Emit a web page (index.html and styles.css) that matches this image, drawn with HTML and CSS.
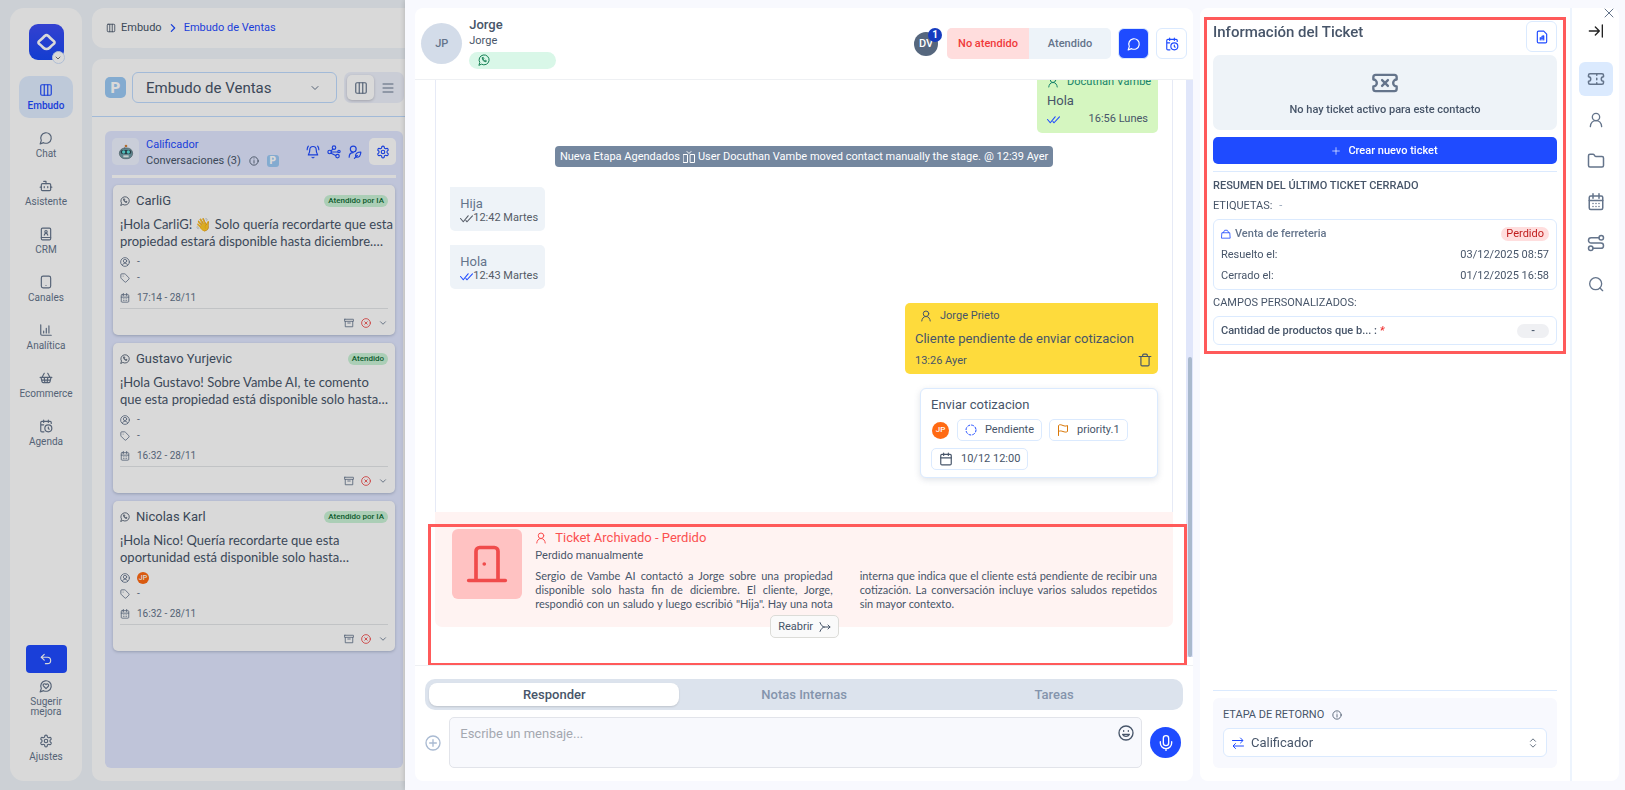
FILE: index.html
```html
<!DOCTYPE html>
<html lang="es">
<head>
<meta charset="utf-8">
<title>Embudo de Ventas</title>
<link rel="stylesheet" href="styles.css">
</head>
<body>
<svg class="sprite" aria-hidden="true">
  <symbol id="columns" viewBox="0 0 24 24"><rect x="3" y="3" width="18" height="18" rx="2"/><path d="M9 3v18M15 3v18"/></symbol>
  <symbol id="chat" viewBox="0 0 24 24"><path d="M7.9 20A9 9 0 1 0 4 16.100L2 22Z"/></symbol>
  <symbol id="bot" viewBox="0 0 24 24"><path d="M12 8V4H8"/><rect x="4" y="8" width="16" height="12" rx="2"/><path d="M2 14h2M20 14h2M15 13v2M9 13v2"/></symbol>
  <symbol id="contact" viewBox="0 0 24 24"><rect x="4" y="2" width="16" height="20" rx="2"/><path d="M4 18h16M9 14c.5-2 1.500-3 3-3s2.500 1 3 3"/><circle cx="12" cy="8" r="2"/></symbol>
  <symbol id="phone" viewBox="0 0 24 24"><rect x="4" y="2" width="16" height="20" rx="3"/><path d="M12 18h.01"/></symbol>
  <symbol id="chart" viewBox="0 0 24 24"><path d="M3 3v16a2 2 0 0 0 2 2h16M8 17v-3M12.500 17V9M17 17V5"/></symbol>
  <symbol id="basket" viewBox="0 0 24 24"><path d="m15 11-1 9M19 11l-4-7M2 11h20M3.500 11l1.600 7.400a2 2 0 0 0 2 1.600h9.800a2 2 0 0 0 2-1.600l1.700-7.400M4.500 15.500h15M5 11l4-7M9 11l1 9"/></symbol>
  <symbol id="calclock" viewBox="0 0 24 24"><path d="M21 7.500V6a2 2 0 0 0-2-2H5a2 2 0 0 0-2 2v14a2 2 0 0 0 2 2h3.500M16 2v4M8 2v4M3 10h5M17.500 17.500 16 16.300V14"/><circle cx="16" cy="16" r="6"/></symbol>
  <symbol id="calendar" viewBox="0 0 24 24"><rect x="3" y="4" width="18" height="18" rx="2"/><path d="M8 2v4M16 2v4M3 10h18"/></symbol>
  <symbol id="caldays" viewBox="0 0 24 24"><rect x="3" y="4" width="18" height="18" rx="2"/><path d="M8 1v6M16 1v6M3 10h18M8 14h.01M12 14h.01M16 14h.01M8 18h.01M12 18h.01M16 18h.01"/></symbol>
  <symbol id="undo" viewBox="0 0 24 24"><path d="M9 14 4 9l5-5"/><path d="M4 9h10.500a5.500 5.500 0 0 1 0 11H11"/></symbol>
  <symbol id="heartchat" viewBox="0 0 24 24"><path d="M7.900 20A9 9 0 1 0 4 16.100L2 22Z"/><path d="M15.800 9.200a2.500 2.500 0 0 0-3.500 0l-.3.400-.35-.3a2.500 2.500 0 1 0-3.200 3.600l3.600 3.500 3.600-3.500a2.500 2.500 0 0 0 .15-3.700"/></symbol>
  <symbol id="gear" viewBox="0 0 24 24"><path d="M12.200 2h-.4a2 2 0 0 0-2 2v.2a2 2 0 0 1-1 1.700l-.4.300a2 2 0 0 1-2 0l-.2-.1a2 2 0 0 0-2.700.7l-.2.400a2 2 0 0 0 .7 2.700l.2.100a2 2 0 0 1 1 1.700v.5a2 2 0 0 1-1 1.800l-.2.100a2 2 0 0 0-.7 2.700l.2.400a2 2 0 0 0 2.700.7l.2-.1a2 2 0 0 1 2 0l.4.300a2 2 0 0 1 1 1.700v.2a2 2 0 0 0 2 2h.4a2 2 0 0 0 2-2v-.2a2 2 0 0 1 1-1.700l.4-.3a2 2 0 0 1 2 0l.2.100a2 2 0 0 0 2.700-.7l.2-.4a2 2 0 0 0-.7-2.700l-.2-.1a2 2 0 0 1-1-1.700v-.5a2 2 0 0 1 1-1.800l.2-.1a2 2 0 0 0 .7-2.700l-.2-.4a2 2 0 0 0-2.700-.7l-.2.100a2 2 0 0 1-2 0l-.4-.3a2 2 0 0 1-1-1.700V4a2 2 0 0 0-2-2z"/><circle cx="12" cy="12" r="3"/></symbol>
  <symbol id="down" viewBox="0 0 24 24"><path d="m6 9 6 6 6-6"/></symbol>
  <symbol id="right" viewBox="0 0 24 24"><path d="m8 4 8 8-8 8"/></symbol>
  <symbol id="updown" viewBox="0 0 24 24"><path d="m6 16 6 6 6-6M6 8l6-6 6 6"/></symbol>
  <symbol id="menu" viewBox="0 0 24 24"><path d="M2 4h20M2 12h20M2 20h20"/></symbol>
  <symbol id="bell" viewBox="0 0 24 24"><path d="M10.300 21a2 2 0 0 0 3.400 0M22 8c0-2.300-.8-4.300-2-6M4 2C2.800 3.700 2 5.700 2 8M6.500 8a5.500 5.500 0 0 1 11 0c0 6 2.500 8 2.500 9H4c0-1 2.500-3 2.500-9"/></symbol>
  <symbol id="nodes" viewBox="0 0 24 24"><circle cx="4.500" cy="12" r="3"/><circle cx="12" cy="4.500" r="3"/><circle cx="18" cy="19" r="3"/><path d="M7.500 12H19M7 10l3-3M7 14l8 4"/><circle cx="20.500" cy="11" r="2"/></symbol>
  <symbol id="useredit" viewBox="0 0 24 24"><circle cx="9" cy="7" r="5"/><path d="M2 21c0-5 3-8 7-8"/><path d="M13 19c-.5-4 3-7 9-7 0 6-3 9.500-7 9-1 0-2-1-2-2zM11 23l5-5"/></symbol>
  <symbol id="info" viewBox="0 0 24 24"><circle cx="12" cy="12" r="10"/><path d="M12 17v-6M12 7h.01"/></symbol>
  <symbol id="whatsapp" viewBox="0 0 24 24"><path d="M2 22l1.600-5A10 10 0 1 1 7.500 20.700z"/><path d="M8.500 8c0 4.500 3 7.500 7.500 7.500l.8-2-2.300-1.200-1.200 1.200c-1-.5-2-1.500-2.500-2.600L12 9.700 10.800 7.400z"/></symbol>
  <symbol id="usercircle" viewBox="0 0 24 24"><circle cx="12" cy="12" r="10.500"/><circle cx="12" cy="9.500" r="4"/><path d="M6 20c0-3 2.500-5 6-5s6 2 6 5"/></symbol>
  <symbol id="tag" viewBox="0 0 24 24"><path d="M12.600 2.600A2 2 0 0 0 11.200 2H4a2 2 0 0 0-2 2v7.200a2 2 0 0 0 .6 1.400l8.700 8.700a2.400 2.400 0 0 0 3.400 0l6.600-6.600a2.400 2.400 0 0 0 0-3.400zM7.500 7.500h.01"/></symbol>
  <symbol id="archive" viewBox="0 0 24 24"><rect x="1" y="3" width="22" height="5" rx="1"/><path d="M3 8v13h18V8M9 12h6"/></symbol>
  <symbol id="xcircle" viewBox="0 0 24 24"><circle cx="12" cy="12" r="10.500"/><path d="m15 9-6 6M9 9l6 6"/></symbol>
  <symbol id="user" viewBox="0 0 24 24"><circle cx="12" cy="7.500" r="5.500"/><path d="M3.500 22c.5-5 3.500-9 8.500-9s8 4 8.500 9"/></symbol>
  <symbol id="checks" viewBox="0 0 24 16"><path d="m1 8 5 6L15 3M11 12l2 2L23 3"/></symbol>
  <symbol id="stage" viewBox="0 0 24 24"><rect x="1" y="7" width="8" height="16"/><rect x="15" y="7" width="8" height="16"/><path d="M8 1l4 4 4-4"/></symbol>
  <symbol id="trash" viewBox="0 0 24 24"><path d="M2 6h20M5 6v14a2 2 0 0 0 2 2h10a2 2 0 0 0 2-2V6M8 6V4a2 2 0 0 1 2-2h4a2 2 0 0 1 2 2v2"/></symbol>
  <symbol id="dashed" viewBox="0 0 24 24"><circle cx="12" cy="12" r="10" stroke-dasharray="4 3.850"/></symbol>
  <symbol id="flag" viewBox="0 0 24 24"><path d="M3 23V3c3-3 6-1 9 0s5 2 9 0v12c-3 2-6 1-9 0s-6-2-9 0"/></symbol>
  <symbol id="door" viewBox="0 0 24 24"><path d="M2 21h20M6 21V5a2 2 0 0 1 2-2h8a2 2 0 0 1 2 2v16M10.500 12h.01"/></symbol>
  <symbol id="merge" viewBox="0 0 24 24"><path d="M2 3c2 5 5 9 9 9h11M2 21c2-5 5-9 9-9M18 8l4 4-4 4"/></symbol>
  <symbol id="plus" viewBox="0 0 24 24"><path d="M12 2v20M2 12h20"/></symbol>
  <symbol id="pluscircle" viewBox="0 0 24 24"><circle cx="12" cy="12" r="10.500"/><path d="M12 7v10M7 12h10"/></symbol>
  <symbol id="smile" viewBox="0 0 24 24"><circle cx="12" cy="12" r="10.500"/><path d="M7 14c2 4 8 4 10 0zM8.500 8.500v1M15.500 8.500v1"/></symbol>
  <symbol id="mic" viewBox="0 0 24 24"><rect x="8" y="1" width="8" height="15" rx="4"/><path d="M3.500 10v2a8.500 8.500 0 0 0 17 0v-2M12 20.500V24"/></symbol>
  <symbol id="file" viewBox="0 0 24 24"><path d="M15 2H6a2 2 0 0 0-2 2v16a2 2 0 0 0 2 2h12a2 2 0 0 0 2-2V7z"/><path d="M9 17v-4M12 17v-6l3-1v7M9 14h5"/></symbol>
  <symbol id="ticketx" viewBox="0 0 24 24"><path d="M2 9a3 3 0 0 1 0 6v2a2 2 0 0 0 2 2h16a2 2 0 0 0 2-2v-2a3 3 0 0 1 0-6V7a2 2 0 0 0-2-2H4a2 2 0 0 0-2 2zM9.500 9.500l5 5M14.500 9.500l-5 5"/></symbol>
  <symbol id="ticket" viewBox="0 0 24 24"><path d="M2 9a3 3 0 0 1 0 6v2a2 2 0 0 0 2 2h16a2 2 0 0 0 2-2v-2a3 3 0 0 1 0-6V7a2 2 0 0 0-2-2H4a2 2 0 0 0-2 2zM13 5v2M13 17v2M13 11v2"/></symbol>
  <symbol id="folder" viewBox="0 0 24 24"><path d="M20 20a2 2 0 0 0 2-2V8a2 2 0 0 0-2-2h-7.900a2 2 0 0 1-1.700-.9l-.8-1.200A2 2 0 0 0 7.900 3H4a2 2 0 0 0-2 2v13a2 2 0 0 0 2 2z"/></symbol>
  <symbol id="route" viewBox="0 0 24 24"><circle cx="5" cy="19" r="3"/><circle cx="19" cy="5" r="3"/><path d="M16 5H5.500a3.500 3.500 0 0 0 0 7h13a3.500 3.500 0 0 1 0 7H8"/></symbol>
  <symbol id="search" viewBox="0 0 24 24"><circle cx="11.500" cy="11.500" r="9"/><path d="m22 22-4-4"/></symbol>
  <symbol id="collapse" viewBox="0 0 24 24"><path d="M2 12h15M11 6l6 6-6 6M21.500 3v18"/></symbol>
  <symbol id="close" viewBox="0 0 24 24"><path d="M4 4l16 16M20 4 4 20"/></symbol>
  <symbol id="bag" viewBox="0 0 24 24"><path d="M3 9h18l1 13H2zM5 9l4-6h6l4 6"/></symbol>
  <symbol id="swap" viewBox="0 0 24 24"><path d="M1 7h20M17 2l5 5-5 5M23 18H3M7 13l-5 5 5 5"/></symbol>
  <symbol id="robot" viewBox="0 0 24 24"><circle cx="12" cy="3" r="2" fill="#d0803a" stroke="none"/><rect x="2" y="6" width="20" height="16" rx="8" fill="#6d9ba5" stroke="#5a6b72" stroke-width="1"/><rect x="4" y="9" width="16" height="6" rx="3" fill="#2e4650" stroke="none"/><circle cx="8.500" cy="12" r="2.500" fill="#5de0dc" stroke="none"/><circle cx="15.500" cy="12" r="2.500" fill="#5de0dc" stroke="none"/><rect x="8" y="17" width="8" height="3" fill="#e8efef" stroke="none"/></symbol>
</svg>

<div class="app">
  <nav class="sidebar" aria-label="Principal">
    <button class="logo" aria-label="Espacio de trabajo">
      <svg class="logo-mark" viewBox="0 0 24 24"><path d="M10 4.500a3 3 0 0 1 4 0c2 2.500 4 4 6.500 6a2 2 0 0 1 0 3c-2 1.500-3 2.500-5 4.500a5 5 0 0 1-7 0c-2-2-3-3-5-4.500a2 2 0 0 1 0-3c2.500-2 4.500-3.500 6.500-6z"/></svg>
      <span class="logo-more"><svg class="i8"><use href="#down"/></svg></span>
    </button>
    <a class="nav-item active" href="#embudo"><svg class="i16"><use href="#columns"/></svg>Embudo</a>
    <a class="nav-item" href="#chat"><svg class="i16"><use href="#chat"/></svg>Chat</a>
    <a class="nav-item" href="#asistente"><svg class="i16"><use href="#bot"/></svg>Asistente</a>
    <a class="nav-item" href="#crm"><svg class="i16"><use href="#contact"/></svg>CRM</a>
    <a class="nav-item" href="#canales"><svg class="i16"><use href="#phone"/></svg>Canales</a>
    <a class="nav-item" href="#analitica"><svg class="i16"><use href="#chart"/></svg>Analítica</a>
    <a class="nav-item" href="#ecommerce"><svg class="i16"><use href="#basket"/></svg>Ecommerce</a>
    <a class="nav-item" href="#agenda"><svg class="i16"><use href="#calclock"/></svg>Agenda</a>
    <div class="nav-foot">
      <button class="back" aria-label="Volver"><svg class="i14"><use href="#undo"/></svg></button>
      <a class="nav-item short" href="#sugerir"><svg class="i16"><use href="#heartchat"/></svg>Sugerir mejora</a>
      <a class="nav-item" href="#ajustes"><svg class="i16"><use href="#gear"/></svg>Ajustes</a>
    </div>
  </nav>

  <div class="main">
    <header class="crumbs">
      <svg class="i12"><use href="#columns"/></svg>
      <a href="#embudo">Embudo</a>
      <svg class="i10 blue"><use href="#right"/></svg>
      <a class="blue" href="#ventas">Embudo de Ventas</a>
    </header>
    <section class="board">
      <div class="toolbar">
        <span class="p-badge large">P</span>
        <div class="funnel">
          <select aria-label="Embudo"><option>Embudo de Ventas</option></select>
          <svg class="i12"><use href="#down"/></svg>
        </div>
        <div class="views">
          <button class="on" aria-label="Columnas"><svg class="i14"><use href="#columns"/></svg></button>
          <button aria-label="Lista"><svg class="i12"><use href="#menu"/></svg></button>
        </div>
      </div>
      <div class="column">
        <div class="col-head">
          <span class="col-avatar"><svg class="i16"><use href="#robot"/></svg></span>
          <div class="col-text">
            <strong>Calificador</strong>
            <span class="col-sub">Conversaciones (3) <svg class="i12"><use href="#info"/></svg><span class="p-badge">P</span></span>
          </div>
          <div class="col-tools">
            <svg class="i14"><use href="#bell"/></svg>
            <svg class="i14"><use href="#nodes"/></svg>
            <svg class="i14"><use href="#useredit"/></svg>
            <button aria-label="Configurar"><svg class="i14"><use href="#gear"/></svg></button>
          </div>
        </div>
        <article class="card">
          <div class="card-head"><svg class="i10"><use href="#whatsapp"/></svg><h3>CarliG</h3><span class="pill">Atendido por IA</span></div>
          <p>¡Hola CarliG! 👋 Solo quería recordarte que esta<br>propiedad estará disponible hasta diciembre.…</p>
          <div class="meta"><svg class="i10"><use href="#usercircle"/></svg>-</div>
          <div class="meta"><svg class="i10"><use href="#tag"/></svg>-</div>
          <div class="meta date"><svg class="i10"><use href="#caldays"/></svg>17:14 - 28/11</div>
          <div class="card-foot"><svg class="i10"><use href="#archive"/></svg><svg class="i10 red"><use href="#xcircle"/></svg><svg class="i10"><use href="#down"/></svg></div>
        </article>
        <article class="card">
          <div class="card-head"><svg class="i10"><use href="#whatsapp"/></svg><h3>Gustavo Yurjevic</h3><span class="pill">Atendido</span></div>
          <p>¡Hola Gustavo! Sobre Vambe AI, te comento<br>que esta propiedad está disponible solo hasta…</p>
          <div class="meta"><svg class="i10"><use href="#usercircle"/></svg>-</div>
          <div class="meta"><svg class="i10"><use href="#tag"/></svg>-</div>
          <div class="meta date"><svg class="i10"><use href="#caldays"/></svg>16:32 - 28/11</div>
          <div class="card-foot"><svg class="i10"><use href="#archive"/></svg><svg class="i10 red"><use href="#xcircle"/></svg><svg class="i10"><use href="#down"/></svg></div>
        </article>
        <article class="card">
          <div class="card-head"><svg class="i10"><use href="#whatsapp"/></svg><h3>Nicolas Karl</h3><span class="pill">Atendido por IA</span></div>
          <p>¡Hola Nico! Quería recordarte que esta<br>oportunidad está disponible solo hasta…</p>
          <div class="meta"><svg class="i10"><use href="#usercircle"/></svg><span class="owner tiny">JP</span></div>
          <div class="meta"><svg class="i10"><use href="#tag"/></svg>-</div>
          <div class="meta date"><svg class="i10"><use href="#caldays"/></svg>16:32 - 28/11</div>
          <div class="card-foot"><svg class="i10"><use href="#archive"/></svg><svg class="i10 red"><use href="#xcircle"/></svg><svg class="i10"><use href="#down"/></svg></div>
        </article>
      </div>
    </section>
  </div>
</div>

<div class="scrim"></div>

<div class="drawer" role="dialog" aria-label="Conversación con Jorge">
  <section class="chat">
    <header class="chat-head">
      <span class="avatar">JP</span>
      <div class="who">
        <h1>Jorge</h1>
        <span class="sub">Jorge</span>
        <span class="channel"><svg class="i12"><use href="#whatsapp"/></svg></span>
      </div>
      <div class="chat-tools">
        <span class="agent">DV<b>1</b></span>
        <div class="state"><button class="off">No atendido</button><button>Atendido</button></div>
        <button class="square fill" aria-label="Chat"><svg class="i14"><use href="#chat"/></svg></button>
        <button class="square" aria-label="Agendar"><svg class="i14"><use href="#calclock"/></svg></button>
      </div>
    </header>

    <div class="stream">
      <div class="thread">
        <div class="bubble sent">
          <span class="author"><svg class="i12"><use href="#user"/></svg>Docuthan Vambe</span>
          <span class="body">Hola</span>
          <span class="time"><svg class="tick blue"><use href="#checks"/></svg>16:56 Lunes</span>
        </div>
        <div class="event">Nueva Etapa Agendados <svg class="i12"><use href="#stage"/></svg> User Docuthan Vambe moved contact manually the stage. <span>@ 12:39 Ayer</span></div>
        <div class="bubble got"><span class="body">Hija</span><span class="time"><svg class="tick"><use href="#checks"/></svg>12:42 Martes</span></div>
        <div class="bubble got"><span class="body">Hola</span><span class="time"><svg class="tick blue"><use href="#checks"/></svg>12:43 Martes</span></div>
        <div class="bubble note">
          <span class="author"><svg class="i12"><use href="#user"/></svg>Jorge Prieto</span>
          <span class="body">Cliente pendiente de enviar cotizacion</span>
          <span class="time">13:26 Ayer <button aria-label="Eliminar"><svg class="i14"><use href="#trash"/></svg></button></span>
        </div>
        <div class="task">
          <h2>Enviar cotizacion</h2>
          <div class="chips">
            <span class="owner">JP</span>
            <span class="chip"><svg class="i12 blue"><use href="#dashed"/></svg>Pendiente</span>
            <span class="chip"><svg class="i12 amber"><use href="#flag"/></svg>priority.1</span>
            <span class="chip"><svg class="i14"><use href="#calendar"/></svg>10/12 12:00</span>
          </div>
        </div>
      </div>
      <div class="archived">
        <span class="door"><svg class="i48"><use href="#door"/></svg></span>
        <div class="arch-text">
          <h2><svg class="i12"><use href="#user"/></svg>Ticket Archivado - Perdido</h2>
          <span>Perdido manualmente</span>
          <p>Sergio de Vambe AI contactó a Jorge sobre una propiedad disponible solo hasta fin de diciembre. El cliente, Jorge, respondió con un saludo y luego escribió "Hija". Hay una nota interna que indica que el cliente está pendiente de recibir una cotización. La conversación incluye varios saludos repetidos sin mayor contexto.</p>
        </div>
        <button class="reopen">Reabrir <svg class="i12"><use href="#merge"/></svg></button>
      </div>
      <div class="scrollbar"><i></i></div>
      <div class="mark mark-ticket"></div>
    </div>

    <footer class="composer">
      <div class="tabs" role="tablist">
        <button class="on" role="tab">Responder</button>
        <button role="tab">Notas Internas</button>
        <button role="tab">Tareas</button>
      </div>
      <div class="write">
        <button class="add" aria-label="Adjuntar"><svg class="i16"><use href="#pluscircle"/></svg></button>
        <div class="field">
          <textarea aria-label="Mensaje" placeholder="Escribe un mensaje..."></textarea>
          <button aria-label="Emoji"><svg class="i16"><use href="#smile"/></svg></button>
        </div>
        <button class="mic" aria-label="Grabar audio"><svg class="i16"><use href="#mic"/></svg></button>
      </div>
    </footer>
  </section>

  <section class="side">
    <div class="info">
      <div class="ticket-info">
        <div class="info-head"><h2>Información del Ticket</h2><button class="square" aria-label="Exportar"><svg class="i14"><use href="#file"/></svg></button></div>
        <div class="empty"><svg class="i28"><use href="#ticketx"/></svg>No hay ticket activo para este contacto</div>
        <button class="create"><svg class="i8"><use href="#plus"/></svg>Crear nuevo ticket</button>
        <h3>RESUMEN DEL ÚLTIMO TICKET CERRADO</h3>
        <div class="line">ETIQUETAS: <span>-</span></div>
        <div class="box">
          <div class="row"><b><svg class="i10 blue"><use href="#bag"/></svg>Venta de ferreteria</b><span class="lost">Perdido</span></div>
          <div class="row"><span>Resuelto el:</span><span>03/12/2025 08:57</span></div>
          <div class="row"><span>Cerrado el:</span><span>01/12/2025 16:58</span></div>
        </div>
        <div class="line">CAMPOS PERSONALIZADOS:</div>
        <div class="box custom"><span>Cantidad de productos que b... : <em>*</em></span><span class="none">-</span></div>
        <div class="mark mark-info"></div>
      </div>
      <div class="return">
        <label for="stage-select">ETAPA DE RETORNO <svg class="i10"><use href="#info"/></svg></label>
        <div class="stage-box">
          <svg class="i12 blue"><use href="#swap"/></svg>
          <select id="stage-select"><option>Calificador</option></select>
          <svg class="i10"><use href="#updown"/></svg>
        </div>
      </div>
    </div>
    <nav class="rail" aria-label="Paneles">
      <button class="dark" aria-label="Contraer"><svg class="i16"><use href="#collapse"/></svg></button>
      <button class="on" aria-label="Ticket"><svg class="i18"><use href="#ticket"/></svg></button>
      <button aria-label="Contacto"><svg class="i16"><use href="#user"/></svg></button>
      <button aria-label="Archivos"><svg class="i18"><use href="#folder"/></svg></button>
      <button aria-label="Calendario"><svg class="i18"><use href="#caldays"/></svg></button>
      <button aria-label="Recorrido"><svg class="i18"><use href="#route"/></svg></button>
      <button aria-label="Buscar"><svg class="i16"><use href="#search"/></svg></button>
    </nav>
  </section>
  <button class="close" aria-label="Cerrar"><svg class="i12"><use href="#close"/></svg></button>
</div>
</body>
</html>
```
FILE: styles.css
```css
:root {
  --ink: #475569;
  --soft: #64748b;
  --blue: #1f4bff;
  --line: #dbeafe;
  --red: #ff5a5a;
}
* { box-sizing: border-box; margin: 0; }
html, body { height: 100%; }
body {
  overflow: hidden;
  background: #f0f5fb;
  color: var(--ink);
  font-family: Roboto, Lato, sans-serif;
  font-size: 11px;
  line-height: 16px;
}
button, select, textarea { font: inherit; color: inherit; background: none; border: 0; padding: 0; }
select { appearance: none; }
a { color: inherit; text-decoration: none; }
h1, h2, h3 { font-weight: 400; }
p { font-family: Lato, Roboto, sans-serif; }
svg { flex: none; fill: none; stroke: currentColor; stroke-width: 2; stroke-linecap: round; stroke-linejoin: round; }
.sprite { display: none; }
.i8 { width: 8px; height: 8px; }
.i10 { width: 10px; height: 10px; }
.i12 { width: 12px; height: 12px; }
.i14 { width: 14px; height: 14px; }
.i16 { width: 16px; height: 16px; }
.i18 { width: 18px; height: 18px; }
.i28 { width: 28px; height: 28px; }
.i48 { width: 44px; height: 44px; }
.blue { color: var(--blue); }
.red { color: #ef4444; }
.amber { color: #d97706; }

/* Application behind the drawer */
.app { display: flex; gap: 10px; height: 100%; padding: 8px 10px 9px; }
.sidebar {
  flex: none; width: 72px; display: flex; flex-direction: column; align-items: center; gap: 6px;
  padding: 16px 4px 12px; border-radius: 14px; background: #fff; color: var(--soft);
}
.logo { position: relative; width: 35px; height: 36px; margin-bottom: 10px; border-radius: 9px; background: linear-gradient(#3d4df5, #1748f5); display: grid; place-items: center; }
.logo-mark { width: 21px; height: 21px; stroke: #fff; stroke-width: 3; }
.logo-more { position: absolute; right: -1px; bottom: -4px; width: 13px; height: 13px; border: 1px solid #cfe0fb; border-radius: 50%; background: #fff; color: #333; display: grid; place-items: center; }
.nav-item { display: flex; flex-direction: column; align-items: center; justify-content: center; gap: 1px; width: 54px; min-height: 42px; font-size: 10px; line-height: 14px; }
.nav-item svg { width: 14px; height: 14px; margin: 1px; }
.nav-item.active { border-radius: 10px; background: #e0edff; color: var(--blue); font-weight: 500; }
.short { width: 42px; text-align: center; line-height: 10px; gap: 3px; }
.nav-foot { margin-top: auto; display: flex; flex-direction: column; align-items: center; gap: 3px; }
.nav-foot .nav-item:last-child { margin-top: 6px; }
.back { width: 41px; height: 28px; border-radius: 4px; background: var(--blue); color: #fff; display: grid; place-items: center; }

.main { flex: 1; min-width: 0; display: flex; flex-direction: column; gap: 11px; }
.crumbs { display: flex; align-items: center; gap: 5px; height: 40px; padding: 0 14px; border-radius: 12px; background: #fff; }
.crumbs svg { width: 10px; height: 10px; }
.crumbs svg.blue { margin: 0 1px; stroke-width: 3; }
.board { flex: 1; display: flex; flex-direction: column; border-radius: 10px; background: #fff; }
.toolbar { display: flex; align-items: center; gap: 7px; padding: 13px; border-bottom: 1px solid #bfdbfe; }
.p-badge { display: grid; place-items: center; width: 12px; height: 12px; border-radius: 3px; background: #9ac9f5; color: #fff; font-size: 10px; line-height: 12px; font-weight: 900; }
.p-badge.large { width: 21px; height: 21px; border-radius: 5px; font-size: 15px; margin-right: -1px; }
.funnel { display: flex; align-items: center; width: 205px; height: 31px; padding: 0 15px 0 13px; border: 1px solid #bfdbfe; border-radius: 6px; }
.funnel select { flex: 1; font-size: 15px; }
.funnel svg { color: var(--soft); }
.views { display: flex; align-items: center; height: 31px; padding: 3px; border-radius: 7px; background: #eef1fc; color: var(--soft); }
.views button { width: 27px; height: 25px; display: grid; place-items: center; }
.views .on { border-radius: 5px; background: #fff; box-shadow: 0 1px 3px #0003; }
.column { flex: 1; width: 298px; margin: 14px 13px 13px; padding: 7px 8px; border-radius: 6px; background: #e1e7ff; }
.col-head { display: flex; align-items: flex-start; gap: 7px; padding-bottom: 6px; margin: 0 -1px 7px; border-bottom: 3px solid #fff; }
.col-avatar { width: 27px; height: 27px; border-radius: 5px; background: #eef3ff; display: grid; place-items: center; }
.col-text strong { display: block; margin-bottom: 2px; color: var(--blue); font-weight: 400; line-height: 13px; }
.col-sub { display: flex; align-items: center; gap: 8px; }
.col-sub svg { width: 10px; height: 10px; }
.col-tools { margin-left: auto; display: flex; align-items: center; gap: 7px; color: var(--blue); }
.col-tools button { width: 27px; height: 27px; border-radius: 5px; background: #fff; display: grid; place-items: center; }
.card { margin-bottom: 8px; padding: 7px 7px 0; border-radius: 5px; background: #fff; box-shadow: 0 1px 3px #64748b66; height: 150px; }
.card-head { display: flex; align-items: center; gap: 6px; height: 18px; }
.card-head h3 { font-size: 13px; }
.pill { margin-left: auto; padding: 0 4px; border-radius: 6px; background: #c9f3d6; color: #0f6b35; font-size: 8px; line-height: 12px; font-weight: 500; }
.card p { padding: 6px 0 4px; font-size: 13px; line-height: 17px; white-space: nowrap; }
.meta { display: flex; align-items: center; gap: 7px; height: 16px; font-size: 10px; color: var(--soft); }
.meta.date { height: 20px; padding-top: 3px; margin-bottom: 2px; }
.card-foot { display: flex; align-items: center; justify-content: flex-end; gap: 7px; height: 28px; border-top: 1px solid #e3e5e8; color: var(--soft); }
.owner { display: grid; place-items: center; width: 17px; height: 17px; border-radius: 50%; background: #ff6a13; color: #fff; font-size: 8px; line-height: 10px; font-weight: 500; }
.owner.tiny { width: 12px; height: 12px; font-size: 7px; }

.scrim { position: fixed; inset: 0; background: #00000026; }

/* Drawer */
.drawer { position: fixed; inset: 0 0 0 auto; width: calc(75% + 1px); display: flex; gap: 7px; padding: 8px 6px 9px 10px; background: #f8f9fe; box-shadow: 0 0 6px #0003; }
.chat { flex: 1; min-width: 0; display: flex; flex-direction: column; border-radius: 8px; background: #fff; }
.chat-head { display: flex; align-items: center; gap: 7px; height: 72px; padding: 0 6px; border-bottom: 1px solid #eef0f3; }
.avatar { width: 41px; height: 41px; border-radius: 50%; background: #d3dce9; color: var(--soft); font-weight: 500; display: grid; place-items: center; }
.who { display: flex; flex-direction: column; padding-bottom: 2px; }
.who h1 { font-size: 13px; line-height: 17px; font-weight: 500; }
.sub { line-height: 16px; }
.channel { width: 87px; height: 17px; margin-top: 3px; padding: 2px 9px; border-radius: 9px; background: #d9f7e8; color: #158054; }
.channel svg { display: block; }
.chat-tools { margin-left: auto; display: flex; align-items: center; gap: 7px; }
.agent { position: relative; width: 24px; height: 24px; margin-right: 2px; border-radius: 50%; background: #56677e; color: #fff; font-weight: 500; display: grid; place-items: center; }
.agent b { position: absolute; right: -4px; top: -4px; width: 14px; height: 14px; border-radius: 50%; background: #163bbf; font-size: 10px; line-height: 14px; text-align: center; }
.state { display: flex; height: 31px; border-radius: 5px; overflow: hidden; background: #edf3f9; }
.state button { width: 82px; font-weight: 500; color: var(--soft); }
.state .off { background: #ffdddd; color: #f03a3a; }
.square { width: 31px; height: 31px; border: 1px solid var(--line); border-radius: 6px; color: var(--blue); display: grid; place-items: center; }
.square.fill { background: var(--blue); color: #fff; }

.stream { position: relative; flex: 1; min-height: 0; overflow: hidden; display: flex; flex-direction: column; justify-content: flex-end; padding: 0 20px 38px; border-bottom: 1px solid #eef0f3; }
.thread { flex: none; display: flex; flex-direction: column; gap: 14px; padding: 0 14px 34px; border: 1px solid #e6eaf6; border-width: 0 1px; }
.bubble { display: flex; flex-direction: column; padding: 8px 10px 6px; border-radius: 5px; }
.body { font-size: 13px; line-height: 17px; }
.time { display: flex; align-items: center; line-height: 13px; }
.author { display: flex; align-items: center; gap: 8px; color: #16836a; white-space: nowrap; }
.tick { width: 13px; height: 9px; }
.got { align-self: flex-start; height: 44px; padding-right: 7px; border-top-left-radius: 0; background: #eef3f8; color: var(--soft); }
.got .time { line-height: 12px; color: #555b66; }
.sent { align-self: flex-end; width: 121px; padding: 0 10px 7px; border-top-right-radius: 0; background: #d5f6c0; }
.sent .body { line-height: 22px; }
.sent .time { justify-content: space-between; line-height: 14px; }
.event { align-self: center; display: flex; align-items: center; gap: 3px; margin: -1px 0 6px; padding: 2px 5px; border-radius: 4px; background: #74879f; color: #fff; line-height: 17px; }
.event svg { stroke-width: 2; }
.note { align-self: flex-end; width: 253px; height: 71px; padding: 5px 10px 7px; justify-content: space-between; border-top-right-radius: 0; background: #fedb3c; }
.note .author { padding-left: 5px; color: var(--ink); }
.note .time { justify-content: space-between; margin-right: -4px; }
.note button { display: flex; }
.task { align-self: flex-end; width: 238px; padding: 7px 10px; border: 1px solid var(--line); border-radius: 6px; background: #fff; box-shadow: 0 2px 6px #64748b33; }
.task h2 { margin-bottom: 6px; font-size: 13px; line-height: 17px; }
.chips { display: flex; flex-wrap: wrap; align-items: center; gap: 7px; }
.chips .owner { margin: 0 1px; }
.chip { display: flex; align-items: center; gap: 8px; height: 22px; padding: 0 7px; border: 1px solid var(--line); border-radius: 5px; }
.archived { flex: none; position: relative; display: flex; gap: 13px; height: 115px; padding: 17px 16px 0 17px; border-radius: 0 0 7px 7px; background: #fff3f2; }
.door { flex: none; width: 70px; height: 70px; border-radius: 6px; background: #ffc2c2; color: #f04b4b; display: grid; place-items: center; }
.arch-text { flex: 1; line-height: 18px; }
.arch-text h2 { display: flex; align-items: center; gap: 8px; color: #fb5050; font-size: 13px; line-height: 18px; }
.arch-text p { columns: 2; column-gap: 27px; margin-top: 4px; line-height: 14px; text-align: justify; }
.reopen { position: absolute; left: 50%; bottom: -11px; width: 69px; height: 23px; margin-left: -34px; border: 1px solid #dcdcd8; border-radius: 5px; background: #fafafa; display: flex; align-items: center; justify-content: center; gap: 6px; }
.scrollbar { position: absolute; top: 0; right: 0; bottom: 8px; width: 7px; background: #e0e6fa; }
.scrollbar i { position: absolute; left: 2px; right: 1px; top: 48%; bottom: 0; border-radius: 2px; background: #a9b9cd; }
.mark { position: absolute; border: 3px solid var(--red); pointer-events: none; }
.mark-ticket { left: 13px; right: 6px; bottom: -1px; height: 142px; }

.composer { padding: 13px 10px; }
.tabs { display: flex; height: 31px; padding: 4px; border-radius: 10px; background: #dce3ed; }
.tabs button { flex: 1; border-radius: 8px; font-size: 13px; font-weight: 500; color: #8494ac; }
.tabs .on { background: #fff; color: var(--ink); box-shadow: 0 1px 2px #0002; }
.write { display: flex; align-items: center; gap: 8px; margin-top: 7px; padding-right: 2px; }
.add { color: #a9bad2; display: flex; }
.field { flex: 1; display: flex; align-items: flex-start; height: 51px; padding: 7px 7px 7px 10px; border: 1px solid #e2e4ea; border-radius: 5px; background: #f8f9fd; }
.field textarea { flex: 1; height: 34px; resize: none; outline: 0; font-size: 13px; line-height: 17px; }
.field textarea::placeholder { color: #a4a8b0; }
.field button { display: flex; }
.mic { width: 31px; height: 31px; border-radius: 50%; background: var(--blue); color: #fff; display: grid; place-items: center; }

.side { flex: none; width: 419px; display: flex; border-radius: 8px; background: #fff; }
.info { flex: 1; display: flex; flex-direction: column; padding: 13px; }
.ticket-info { position: relative; }
.mark-info { inset: -4px -9px -7px; }
.info-head { display: flex; justify-content: space-between; margin-bottom: 3px; }
.info h2 { font-size: 15px; line-height: 22px; font-weight: 500; }
.empty { display: flex; flex-direction: column; align-items: center; gap: 5px; height: 75px; padding-top: 14px; border-radius: 7px; background: #eef3f8; font-weight: 500; }
.empty svg { color: var(--soft); }
.create { display: flex; align-items: center; justify-content: center; gap: 8px; width: 100%; height: 27px; margin: 7px 0; border-radius: 5px; background: var(--blue); color: #fff; font-weight: 500; }
.info h3 { padding-top: 5px; border-top: 1px solid var(--line); font-size: 11px; line-height: 18px; font-weight: 500; }
.line { line-height: 22px; }
.line span { margin-left: 4px; color: #94a3b8; }
.box { margin: 2px 0; padding: 3px 7px; border: 1px solid var(--line); border-radius: 6px; }
.row { display: flex; align-items: center; justify-content: space-between; line-height: 21px; }
.row b { display: flex; align-items: center; gap: 4px; color: var(--soft); font-weight: 500; }
.lost { padding: 0 5px; border-radius: 7px; background: #ffdede; color: #c01c1c; line-height: 14px; }
.custom { display: flex; align-items: center; justify-content: space-between; height: 29px; font-weight: 500; }
.custom em { color: #f03030; }
.none { width: 32px; border-radius: 7px; background: #eff0f3; line-height: 14px; text-align: center; }
.return { position: relative; margin-top: auto; padding: 9px 10px 11px; border-radius: 6px; background: #f8f9fe; }
.return::before { content: ""; position: absolute; inset: -8px 0 auto; border-top: 1px solid var(--line); }
.return label { display: flex; align-items: center; gap: 8px; }
.stage-box { display: flex; align-items: center; gap: 7px; height: 29px; margin-top: 5px; padding: 0 8px; border: 1px solid var(--line); border-radius: 6px; background: #fff; }
.stage-box select { flex: 1; font-size: 13px; }
.rail { flex: none; width: 49px; display: flex; flex-direction: column; align-items: center; gap: 7px; padding-top: 6px; border-left: 2px solid #edf4fd; color: var(--soft); }
.rail button { width: 34px; height: 34px; border-radius: 6px; display: grid; place-items: center; }
.rail .dark { margin-bottom: 7px; color: #222; }
.rail .on { background: #dbeafe; }
.close { position: absolute; top: 7px; right: 10px; display: flex; color: var(--soft); }
```
